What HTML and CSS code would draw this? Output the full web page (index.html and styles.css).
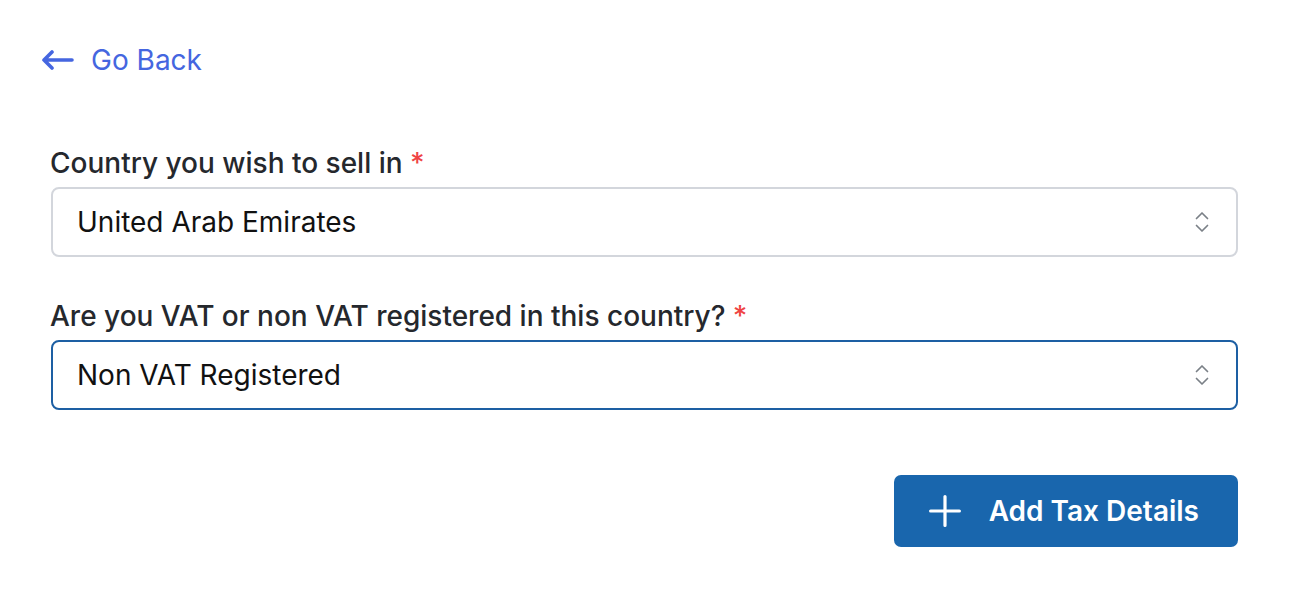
FILE: index.html
```html
<!DOCTYPE html>
<html>
<head>
<meta charset="utf-8">
<link rel="stylesheet" href="styles.css">
</head>
<body>
<div class="page">
  <a class="back" href="#">
    <svg class="back-icon" width="32" height="20" viewBox="0 0 32 20" fill="none" stroke="#4566e0" stroke-width="3.6" stroke-linecap="round" stroke-linejoin="round"><path d="M30 10H2M10 2L2 10L10 18"/></svg>
    <span>Go Back</span>
  </a>
  <div class="form">
    <div class="field">
      <label class="label">Country you wish to sell in <span class="req">*</span></label>
      <div class="select">
        <span>United Arab Emirates</span>
        <svg class="chev" width="14" height="22" viewBox="0 0 14 22" fill="none" stroke="#7b8087" stroke-width="1.7" stroke-linecap="round" stroke-linejoin="round"><path d="M1.5 7.5L7 2L12.5 7.5M1.5 14.5L7 20L12.5 14.5"/></svg>
      </div>
    </div>
    <div class="field">
      <label class="label">Are you VAT or non VAT registered in this country? <span class="req">*</span></label>
      <div class="select focused">
        <span>Non VAT Registered</span>
        <svg class="chev" width="14" height="22" viewBox="0 0 14 22" fill="none" stroke="#7b8087" stroke-width="1.7" stroke-linecap="round" stroke-linejoin="round"><path d="M1.5 7.5L7 2L12.5 7.5M1.5 14.5L7 20L12.5 14.5"/></svg>
      </div>
    </div>
    <div class="actions">
      <button class="btn">
        <svg width="32" height="32" viewBox="0 0 32 32" fill="none" stroke="#fff" stroke-width="3.2" stroke-linecap="round"><path d="M16 1.6V30.4M1.6 16H30.4"/></svg>
        <span>Add Tax Details</span>
      </button>
    </div>
  </div>
</div>
</body>
</html>
```
FILE: styles.css
```css
* { box-sizing: border-box; }
html, body { margin: 0; padding: 0; background: #fff; }
body { font-family: Inter, "Noto Sans", sans-serif; color: #23262b; }
.page { padding: 42px 64px 0 51px; }
.back {
  display: inline-flex; align-items: center; gap: 17px;
  color: #4566e0; text-decoration: none; font-size: 28px;
  margin-left: -9px; height: 36px;
}
.back-icon { display: block; }
.form { margin-top: 68px; display: flex; flex-direction: column; }
.field { display: flex; flex-direction: column; }
.field + .field { margin-top: 42px; }
.label { font-size: 28px; font-weight: 500; color: #25282d; line-height: 34px; margin-bottom: 7px; margin-left: -1px; }
.req { color: #ef4444; }
.select {
  height: 70px; border: 2px solid #d3d6dc; border-radius: 8px;
  display: flex; align-items: center; justify-content: space-between;
  padding: 0 27px 0 24px; font-size: 28px; color: #111;
}
.select.focused { border-color: #1d5fa3; }
.chev { display: block; }
.actions { display: flex; justify-content: flex-end; margin-top: 65px; }
.btn {
  display: flex; align-items: center; gap: 28px;
  height: 72px; padding: 0 39px 0 35px;
  background: #1966ad; color: #fff; border: none; border-radius: 7px;
  font-family: Inter, sans-serif; font-size: 28px; font-weight: 600;
}
```
